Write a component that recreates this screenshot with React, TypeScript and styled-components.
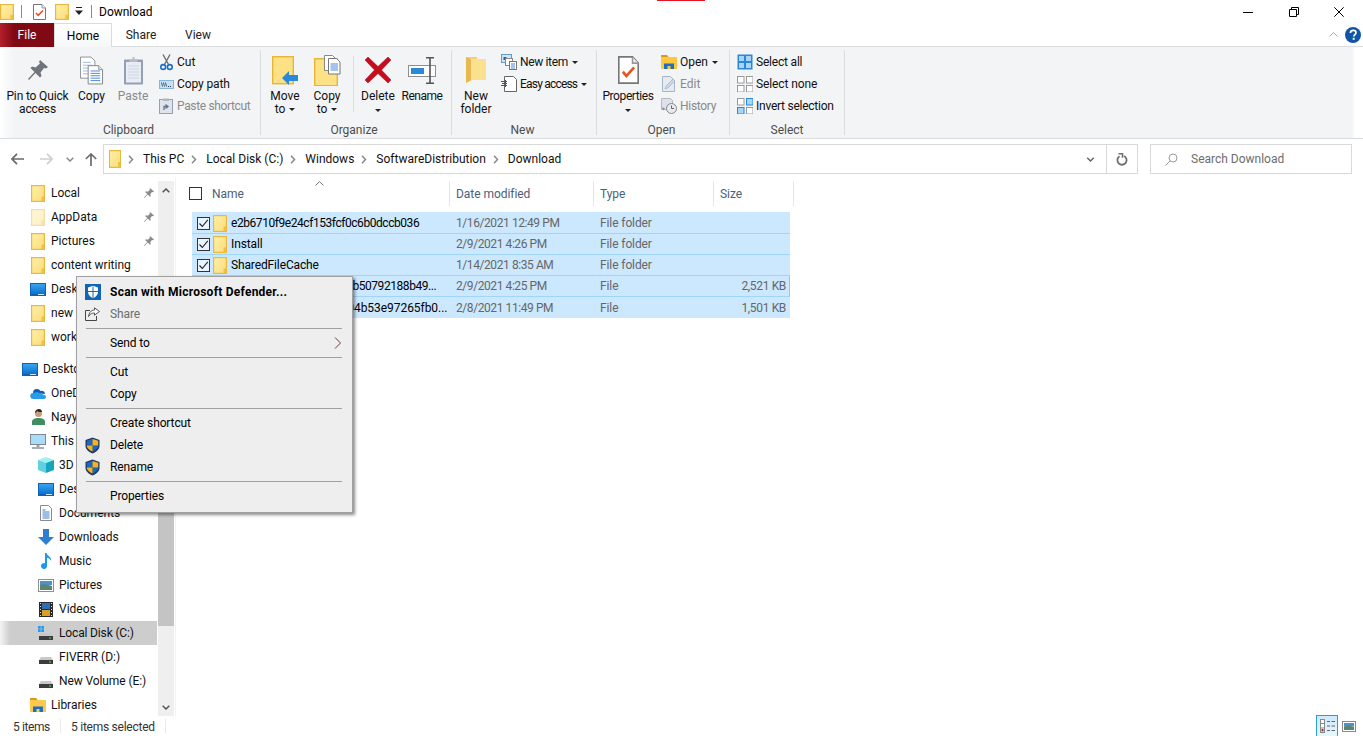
import React from "react";
import styled, { createGlobalStyle } from "styled-components";

const Global = createGlobalStyle`
  html, body { margin: 0; padding: 0; background: #fff; }
  body { font-family: Roboto, "Liberation Sans", sans-serif; font-size: 12px; color: #000; }
  svg { display: block; flex-shrink: 0; }
  * { box-sizing: border-box; }
`;

const Page = styled.div`
  position: relative; width: 1363px; height: 736px; overflow: hidden;
  display: flex; flex-direction: column; background: #fff;
`;
const RedStrip = styled.div`
  position: absolute; left: 657px; top: 0; width: 48px; height: 1px; background: #e81123;
`;
const TitleBar = styled.div`display: flex; align-items: center; height: 23px; flex: none;`;
const QuickSep = styled.div<{ $ml: number; $mr: number }>`
  width: 1px; height: 13px; background: #8a8a8a; margin-left: ${p => p.$ml}px; margin-right: ${p => p.$mr}px;
`;
const QuickSlot = styled.div<{ $ml: number }>`margin-left: ${p => p.$ml}px;`;
const WindowTitle = styled.div`margin-left: 7px; font-size: 12px; color: #000;`;
const WinControls = styled.div`margin-left: auto; display: flex; padding-right: 1px;`;
const WinButton = styled.div`width: 45.5px; height: 21px; display: flex; align-items: center; justify-content: center;`;

const TabRow = styled.div`
  display: flex; align-items: stretch; height: 24px; flex: none; border-bottom: 1px solid #dadbdc;
`;
const FileTab = styled.div`
  width: 54px; margin-bottom: -1px; color: #fff; display: flex; align-items: center; justify-content: center;
  background: linear-gradient(90deg, #b3202c 0, #7f0a14 14px, #7f0a14 100%);
`;
const Tab = styled.div<{ $w: number; $active?: boolean }>`
  width: ${p => p.$w}px; display: flex; align-items: center; justify-content: center; color: #222;
  ${p => p.$active ? `background: linear-gradient(#fff, #f6f7f8); border: 1px solid #dadbdc; border-bottom: 0; margin-bottom: -1px; color: #000;` : ""}
`;
const TabTools = styled.div`
  margin-left: auto; display: flex; align-items: center; gap: 7px; padding-right: 2px;
`;

const Ribbon = styled.div`
  height: 92px; flex: none; display: flex; padding-top: 3px; border-bottom: 1px solid #dadbdc;
  background: linear-gradient(90deg, #fff 0, #f3f4f6 14px, #f3f4f6 1352px, #fff 1355px);
`;
const Group = styled.div<{ $w: number; $pl?: number }>`
  width: ${p => p.$w}px; height: 85px; display: flex; flex-direction: column; flex: none;
  border-right: 1px solid #dcdddf; padding-left: ${p => p.$pl ?? 0}px;
`;
const GroupBody = styled.div`flex: 1; display: flex; align-items: flex-start; min-height: 0;`;
const GroupLabel = styled.div<{ $offset?: number }>`
  height: 14px; line-height: 18px; text-align: center; color: #4d4d4d; margin-left: ${p => p.$offset ?? 0}px;
`;
const LargeButton = styled.div<{ $w: number }>`
  width: ${p => p.$w}px; flex: none; display: flex; flex-direction: column; align-items: center; padding-top: 2px;
`;
const LargeIcon = styled.div`height: 36px; display: flex; align-items: center; justify-content: center;`;
const LargeText = styled.div<{ $off?: boolean; $ls?: number }>`
  line-height: 13px; text-align: center; white-space: nowrap; margin-top: 2px; color: ${p => p.$off ? "#8a8a8a" : "#111"};
  letter-spacing: ${p => p.$ls ?? 0}px;
`;
const VSep = styled.div`width: 1px; height: 56px; margin: 6px 0 0 4px; background: #dcdddf; flex: none;`;
const SmallColumn = styled.div<{ $ml?: number }>`
  display: flex; flex-direction: column; padding-top: 1px; margin-left: ${p => p.$ml ?? 0}px;
`;
const SmallRow = styled.div<{ $off?: boolean }>`
  display: flex; align-items: center; gap: 3px; height: 22px; white-space: nowrap; color: ${p => p.$off ? "#8a8a8a" : "#111"};
`;
const SmallLabel = styled.span<{ $ls?: number }>`letter-spacing: ${p => p.$ls ?? 0}px;`;
const SmallIcon = styled.div`width: 16px; display: flex; justify-content: center;`;
const Caret = styled.span`
  display: inline-block; width: 0; height: 0; margin-left: 4px; vertical-align: 2px;
  border-left: 3px solid transparent; border-right: 3px solid transparent; border-top: 3px solid #222;
`;
const CaretOnly = styled(Caret)`margin-left: 0; vertical-align: 1px;`;

const AddressRow = styled.div`
  height: 39px; flex: none; display: flex; align-items: flex-start; padding: 5px 11px 0 11px;
`;
const NavArrow = styled.div<{ $ml: number }>`
  height: 30px; display: flex; align-items: center; margin-left: ${p => p.$ml}px;
`;
const AddressBox = styled.div`
  flex: 1; height: 30px; margin-left: 6px; border: 1px solid #d9d9d9; display: flex; align-items: center; padding-left: 5px;
`;
const Crumb = styled.div`display: flex; align-items: center; white-space: nowrap; color: #111;`;
const CrumbText = styled.span`margin-left: 9px;`;
const CrumbChevron = styled.div`margin-left: 7px;`;
const AddressDrop = styled.div`margin-left: auto; display: flex; align-items: center;`;
const RefreshSlot = styled.div`
  margin-left: 11px; width: 31px; height: 28px; border-left: 1px solid #d9d9d9;
  display: flex; align-items: center; justify-content: center;
`;
const SearchBox = styled.div`
  width: 202px; height: 30px; margin-left: 12px; border: 1px solid #d9d9d9; display: flex; align-items: center;
  padding-left: 14px; gap: 13px; color: #6d6d6d;
`;

const Main = styled.div`flex: 1; display: flex; min-height: 0;`;
const NavPane = styled.div`width: 158px; flex: none; padding-top: 3px; overflow: hidden;`;
const NavRow = styled.div<{ $level: number; $sel?: boolean; $gap?: boolean }>`
  width: 157px; height: 24px; display: flex; align-items: center; gap: 5px; white-space: nowrap; color: #111;
  padding-left: ${p => 22 + p.$level * 8}px; padding-right: 3px;
  margin-top: ${p => p.$gap ? 8 : 0}px;
  ${p => p.$sel ? "background: linear-gradient(90deg, #f4f4f4 0, #cdcdcd 10px, #cdcdcd 100%);" : ""}
`;
const NavLabel = styled.span<{ $ls?: number }>`letter-spacing: ${p => p.$ls ?? 0}px;`;
const NavIcon = styled.div`width: 16px; display: flex; justify-content: center; flex: none;`;
const NavPin = styled.div`margin-left: auto;`;
const Track = styled.div`
  width: 16px; flex: none; margin-top: 3px; background: #efefef; display: flex; flex-direction: column;
`;
const TrackButton = styled.div`height: 18px; display: flex; align-items: center; justify-content: center; flex: none;`;
const TrackGap = styled.div<{ $h?: number }>`
  ${p => p.$h ? `height: ${p.$h}px; flex: none;` : "flex: 1;"}
`;
const Thumb = styled.div`height: 326px; flex: none; background: #c4c4c4;`;

const ListPane = styled.div`flex: 1; border-left: 1px solid #f2f2f2; margin-left: 1px; padding-top: 3px; min-width: 0;`;
const HeaderRow = styled.div`display: flex; height: 25px; color: #4c607a;`;
const HeaderCell = styled.div<{ $w: number }>`
  position: relative; width: ${p => p.$w}px; flex: none; display: flex; align-items: center; padding-left: 6px;
  border-right: 1px solid #e5e5e5; letter-spacing: -0.05px;
`;
const HeaderNameCell = styled(HeaderCell)`padding-left: 13px; gap: 10px;`;
const HeaderCheck = styled.div`width: 13px; height: 13px; border: 1px solid #333; background: #fff; flex: none;`;
const SortArrow = styled.div`position: absolute; left: 139px; top: 0;`;
const Rows = styled.div`margin: 6px 0 0 16px; width: 598px;`;
const Row = styled.div<{ $focus?: boolean; $first?: boolean }>`
  display: grid; grid-template-columns: 264px 144px 120px 70px; height: 21px; align-items: center; background: #cce8ff;
  border-top: 1px solid ${p => p.$first ? "#cce8ff" : "#9fd4fb"};
  ${p => p.$focus ? "box-shadow: inset 1px 0 #8ccbf8, inset -1px 0 #8ccbf8;" : ""}
  &:last-child { height: 22px; }
`;
const NameCell = styled.div`display: flex; align-items: center; white-space: nowrap; overflow: hidden; padding-left: 5px; color: #000;`;
const RowCheck = styled.div`width: 13px; height: 13px; border: 1px solid #333; background: #e8f4ff; flex: none;`;
const RowFolder = styled.div`width: 14px; margin-left: 3px; flex: none;`;
const RowName = styled.span<{ $ls: number }>`margin-left: 4px; letter-spacing: ${p => p.$ls}px;`;
const MetaCell = styled.div<{ $ls?: number }>`color: #666; white-space: nowrap; letter-spacing: ${p => p.$ls ?? 0}px;`;
const SizeCell = styled(MetaCell)`text-align: right; padding-right: 4px;`;

const StatusBar = styled.div`height: 20px; flex: none; display: flex; align-items: center; color: #333; padding-right: 7px;`;
const StatusCount = styled.div`width: 61px; padding-left: 13px; height: 14px; line-height: 16px; border-right: 1px solid #eaeaea; white-space: nowrap; letter-spacing: -0.4px;`;
const StatusSelected = styled.div`width: 105px; padding-left: 10px; height: 14px; line-height: 16px; border-right: 1px solid #eaeaea; white-space: nowrap; letter-spacing: -0.25px;`;
const ViewSwitch = styled.div`margin-left: auto; display: flex; align-items: center; gap: 4px;`;
const DetailsButton = styled.div`
  width: 22px; height: 21px; margin-top: -1px; border: 1px solid #26a0da; border-bottom: 0;
  background: linear-gradient(#cfe9fc, #e5f6fe); display: flex; align-items: center; justify-content: center;
`;

const ContextMenu = styled.div`
  position: absolute; left: 76px; top: 276px; width: 277px; height: 237px; padding-top: 4px;
  background: #eeeeee; border: 1px solid #a0a0a0; box-shadow: 2px 2px 3px rgba(0,0,0,.45);
`;
const MenuItem = styled.div<{ $off?: boolean; $bold?: boolean }>`
  height: 22px; display: flex; align-items: center; padding-left: 8px; position: relative; white-space: nowrap;
  color: ${p => p.$off ? "#6d6d6d" : "#000"}; font-weight: ${p => p.$bold ? 700 : 400};
  letter-spacing: ${p => p.$bold ? 0.25 : -0.12}px;
`;
const MenuIconSlot = styled.div`width: 25px; flex: none;`;
const MenuArrow = styled.div`margin-left: auto; margin-right: 11px;`;
const MenuSep = styled.div`height: 1px; background: #a0a0a0; margin: 3px 10px 3px 9px;`;

/* ---------- icons ---------- */
const FolderIcon = ({ w = 14, h = 17, faded = false }: { w?: number; h?: number; faded?: boolean }) => (
  <svg width={w} height={h} viewBox="0 0 14 17" preserveAspectRatio="none" opacity={faded ? 0.45 : 1}>
    <defs><linearGradient id="fg" x1="0" y1="0" x2="1" y2="1"><stop offset="0" stopColor="#fff0a8" /><stop offset="1" stopColor="#fbdc7a" /></linearGradient></defs>
    <rect x=".6" y=".6" width="12.8" height="15.8" fill="url(#fg)" stroke="#e8b840" strokeWidth="1.2" />
    <path d="M10.5 11.5h2.5v5h-2.5z" fill="#f0c040" />
  </svg>
);
const CheckDoc = ({ w = 13, h = 16 }: { w?: number; h?: number }) => (
  <svg width={w} height={h} viewBox="0 0 13 16" preserveAspectRatio="none">
    <path d="M.5.5h8.5l3.5 3.5v11.5h-12z" fill="#fff" stroke="#777" />
    <path d="M9 .5v3.5h3.5" fill="#eee" stroke="#999" />
    <path d="M3 9l2.2 2.4L10 6.5" fill="none" stroke="#e8531f" strokeWidth="1.6" />
  </svg>
);
const QuickDown = () => (
  <svg width="10" height="9" viewBox="0 0 10 9"><path d="M2 .5h6" stroke="#222" /><path d="M1 3.5h8L5 8z" fill="#222" /></svg>
);
const MinIcon = () => <svg width="10" height="10" viewBox="0 0 10 10"><path d="M0 5.5h10" stroke="#000" /></svg>;
const RestoreIcon = () => (
  <svg width="10" height="10" viewBox="0 0 10 10"><path d="M.5 2.5h7v7h-7z" fill="none" stroke="#000" /><path d="M2.5 2.5v-2h7v7h-2" fill="none" stroke="#000" /></svg>
);
const CloseIcon = () => <svg width="10" height="10" viewBox="0 0 10 10"><path d="M.3.3l9.4 9.4M9.7.3L.3 9.7" stroke="#000" /></svg>;
const CollapseIcon = () => <svg width="9" height="5" viewBox="0 0 9 5"><path d="M.5 4.5l4-4 4 4" fill="none" stroke="#aaa" /></svg>;
const HelpIcon = () => (
  <svg width="16" height="16" viewBox="0 0 16 16">
    <circle cx="8" cy="8" r="8" fill="#0f56a8" />
    <path d="M5.4 6c0-1.6 1.2-2.6 2.8-2.6S11 4.3 11 5.7c0 2-2.2 2-2.2 3.9" fill="none" stroke="#fff" strokeWidth="1.7" />
    <rect x="7.7" y="10.8" width="2" height="2" fill="#fff" />
  </svg>
);
const PinBig = () => (
  <svg width="20" height="20" viewBox="0 0 20 20">
    <path d="M12 0L20 7 18 8.5 16 8 12.5 12.5 13.5 16 12 17.5 7.5 13 1 20 0 19 6.5 12 2.5 8 4 6.5 7.5 7.5 12 3.5 11 2z" fill="#70757b" />
  </svg>
);
const CopyBig = () => (
  <svg width="24" height="29" viewBox="0 0 25 29">
    <path d="M.5.5h11l4 4v18H.5z" fill="#fff" stroke="#8d9196" />
    <path d="M3 6h8M3 9h10M3 12h10M3 15h10M3 18h10" stroke="#9db9dd" />
    <path d="M8.500 9.500h11l4 4v15h-15z" fill="#fff" stroke="#7f8388" />
    <path d="M19.500 9.500v4h4" fill="#e6e6e6" stroke="#999" />
    <path d="M11 15h10M11 17.500h10M11 20h10M11 22.500h10M11 25h10" stroke="#4a86d8" />
  </svg>
);
const PasteBig = () => (
  <svg width="21" height="29" viewBox="0 0 21 29" opacity=".8">
    <rect x="1" y="3.500" width="19" height="25" rx="1" fill="#7d8ba6" />
    <rect x="3" y="6" width="15" height="20.500" fill="#e7ebf3" />
    <path d="M5 10h11M5 13h11M5 16h11M5 19h11M5 22h11" stroke="#c5cfe0" />
    <path d="M6.500 6V3.500h3V1h2v2.500h3V6z" fill="#a8aeb8" />
  </svg>
);
const Scissors = () => (
  <svg width="13" height="17" viewBox="0 0 13 17">
    <path d="M3 .5L8.500 10.500M10 .5L4.500 10.500" stroke="#6e7074" strokeWidth="1.4" />
    <circle cx="3.200" cy="13" r="2.400" fill="none" stroke="#1e6fc4" strokeWidth="1.6" />
    <circle cx="9.800" cy="13" r="2.400" fill="none" stroke="#1e6fc4" strokeWidth="1.6" />
  </svg>
);
const CopyPath = () => (
  <svg width="15" height="9" viewBox="0 0 15 9">
    <rect x=".5" y=".5" width="14" height="8" fill="#c3e1f7" stroke="#86b5dc" />
    <path d="M2.500 2.500l1 4M4.500 2.500l1 4M6.500 2.500l1 4" stroke="#333" strokeWidth=".8" />
    <path d="M9 6.500h1M11 6.500h1" stroke="#333" />
  </svg>
);
const PasteShortcut = () => (
  <svg width="14" height="16" viewBox="0 0 14 16">
    <rect x=".5" y="1.500" width="13" height="14" fill="#dfe3ea" stroke="#98a0ae" />
    <rect x="4" y=".5" width="6" height="2.500" fill="#b2b7bf" />
    <path d="M5 12V8.500h3M6.500 6.500L9 8.500 6.500 10.500" fill="none" stroke="#62738e" strokeWidth="1.3" />
  </svg>
);
const MoveTo = () => (
  <svg width="27" height="29" viewBox="0 0 27 29">
    <rect x=".7" y=".7" width="20.600" height="27" fill="#fde285" stroke="#e6b53a" strokeWidth="1.400" />
    <path d="M10 22l7-7v4h9v6h-9v4z" fill="#2a88d8" />
  </svg>
);
const CopyTo = () => (
  <svg width="27" height="31" viewBox="0 0 27 31">
    <rect x=".7" y="3.700" width="22.600" height="27" fill="#fde285" stroke="#e6b53a" strokeWidth="1.400" />
    <path d="M10.500 .5h8l3 3v12h-11z" fill="#fff" stroke="#888" />
    <path d="M14.500 3.500h8l3.500 3.500v12h-11.500z" fill="#fff" stroke="#777" />
    <path d="M16.500 9h7.500M16.500 11h7.500M16.500 13h7.500M16.500 15h7.500" stroke="#4a86d8" />
  </svg>
);
const DeleteX = () => (
  <svg width="26" height="26" viewBox="0 0 26 26">
    <path d="M3 0l10 9.500L23 0l3 3-9.500 10L26 23l-3 3-10-9.500L3 26l-3-3 9.500-10L0 3z" fill="#c80c1e" stroke="#8f1420" strokeWidth=".5" />
  </svg>
);
const RenameIcon = () => (
  <svg width="29" height="27" viewBox="0 0 29 27">
    <rect x=".5" y="8.500" width="27" height="11" fill="#fff" stroke="#8a8f94" />
    <rect x="3" y="11" width="13" height="6" fill="#2a88d8" />
    <path d="M18 .8h3.500L22 1.500l.500-.7H26M22 1.500v24M18 26.200h3.500l.5-.7.500.7H26" fill="none" stroke="#555" strokeWidth="1.600" />
  </svg>
);
const NewFolderBig = () => (
  <svg width="20" height="28" viewBox="0 0 20 28">
    <path d="M0 1h11v2h9v21H6L0 27z" fill="#f3cf70" />
    <path d="M5 3h15v21H5z" fill="#fbe08f" />
    <path d="M0 1l5 2v21l-5 3z" fill="#e8b94f" />
  </svg>
);
const NewItem = () => (
  <svg width="16" height="16" viewBox="0 0 16 16">
    <rect x=".5" y=".5" width="10" height="8" fill="#cfe6f8" stroke="#5e9bc8" />
    <path d="M2.500 3h3v3h-3z" fill="#555" />
    <rect x="4.500" y="4.500" width="7" height="7" fill="#fff" stroke="#888" />
    <rect x="8.500" y="7.500" width="7" height="8" fill="#fff" stroke="#777" />
    <path d="M10 10h4M10 12h4M10 14h4" stroke="#4a86d8" />
  </svg>
);
const EasyAccess = () => (
  <svg width="16" height="16" viewBox="0 0 16 16">
    <path d="M3.500.5h9l3 3v12h-12z" fill="#fff" stroke="#666" />
    <path d="M0 5.500h6M1 7.500h5M0 9.500h6" stroke="#1e5fa8" />
    <path d="M4.500 4v7" stroke="#1e5fa8" />
  </svg>
);
const OpenIcon = () => (
  <svg width="16" height="14" viewBox="0 0 16 14">
    <path d="M0 0h6l1.500 2H16v12H0z" fill="#fdc83e" />
    <path d="M0 0h6l1.500 2H0z" fill="#d99a1a" />
    <path d="M3 14V8.500h10V14h-3.500v-3h-3v3z" fill="#1e6fc4" />
  </svg>
);
const EditIcon = () => (
  <svg width="14" height="16" viewBox="0 0 14 16">
    <path d="M.5.500h8l4 4v11H.5z" fill="#e6ebf3" stroke="#a9b4c6" />
    <path d="M3 13l1-3 7-7 2 2-7 7z" fill="#c9d4e5" stroke="#a0adc2" strokeWidth=".6" />
  </svg>
);
const HistoryIcon = () => (
  <svg width="16" height="16" viewBox="0 0 16 16">
    <path d="M.5.500h9l2 2v9H.5z" fill="#dde2ea" stroke="#b3b8c1" />
    <circle cx="10.500" cy="10.500" r="5" fill="#e8eaee" stroke="#84898f" />
    <path d="M10.500 7.500v3h2.500" fill="none" stroke="#666" />
    <path d="M1 9l3 1.500L2 12.500" fill="#8a8f96" />
  </svg>
);
const GridIcon = ({ cells, border }: { cells: string[]; border?: string[] }) => (
  <svg width="16" height="16" viewBox="0 0 16 16">
    {[[0, 0], [9, 0], [0, 9], [9, 9]].map(([x, y], i) => (
      <rect key={i} x={x + .5} y={y + .5} width="6.500" height="6.500" fill={cells[i]} stroke={border ? border[i] : "#2b88d8"} />
    ))}
  </svg>
);
const SelectAll = () => (
  <svg width="16" height="16" viewBox="0 0 16 16">
    <rect x=".5" y=".5" width="15" height="15" fill="#2b88d8" />
    <path d="M2 2h5v5H2zM9 2h5v5H9zM2 9h5v5H2zM9 9h5v5H9z" fill="#a9d4f5" />
  </svg>
);
const GRAY = "#9a9a9a", BLUE = "#2b88d8", LIGHT = "#a9d4f5";

const Chevron = ({ color = "#888" }: { color?: string }) => (
  <svg width="6" height="9" viewBox="0 0 6 9"><path d="M1 .8l3.500 3.700L1 8.200" fill="none" stroke={color} strokeWidth="1.500" /></svg>
);
const BackArrow = ({ color }: { color: string }) => (
  <svg width="13" height="12" viewBox="0 0 13 12"><path d="M6 .8L1 6l5 5.200M1 6h12" fill="none" stroke={color} strokeWidth="1.700" /></svg>
);
const ForwardArrow = ({ color }: { color: string }) => (
  <svg width="13" height="12" viewBox="0 0 13 12"><path d="M7 .8L12 6l-5 5.200M12 6H0" fill="none" stroke={color} strokeWidth="1.700" /></svg>
);
const UpArrow = ({ color }: { color: string }) => (
  <svg width="12" height="13" viewBox="0 0 12 13"><path d="M.8 6L6 1l5.200 5M6 1v12" fill="none" stroke={color} strokeWidth="1.700" /></svg>
);
const SmallDown = ({ color = "#777", w = 8 }: { color?: string; w?: number }) => (
  <svg width={w} height="5" viewBox="0 0 8 5"><path d="M.7.7L4 4l3.300-3.300" fill="none" stroke={color} strokeWidth="1.500" /></svg>
);
const SmallUp = ({ color = "#555", w = 8 }: { color?: string; w?: number }) => (
  <svg width={w} height="5" viewBox="0 0 8 5"><path d="M.7 4.300L4 1l3.300 3.300" fill="none" stroke={color} strokeWidth="1.500" /></svg>
);
const RefreshIcon = () => (
  <svg width="12" height="13" viewBox="0 0 12 13">
    <path d="M3.500 3.300a4.600 4.600 0 1 0 4.500-.3" fill="none" stroke="#707070" strokeWidth="1.800" />
    <path d="M2.500 .8h4v4" fill="none" stroke="#707070" strokeWidth="1.600" />
  </svg>
);
const SearchIcon = () => (
  <svg width="13" height="13" viewBox="0 0 13 13">
    <circle cx="8" cy="5" r="4" fill="none" stroke="#9a9a9a" />
    <path d="M5 8l-4.500 4.500" stroke="#9a9a9a" />
  </svg>
);
const PinSmall = () => (
  <svg width="10" height="10" viewBox="0 0 20 20">
    <path d="M12 0L20 7 18 8.500 16 8 12.500 12.500 13.500 16 12 17.500 7.500 13 1 20 0 19 6.500 12 2.500 8 4 6.500 7.500 7.500 12 3.500 11 2z" fill="#8a8a8a" />
  </svg>
);
const DesktopIcon = () => (
  <svg width="16" height="13" viewBox="0 0 16 13">
    <defs><linearGradient id="dg" x1="0" y1="0" x2="0" y2="1"><stop offset="0" stopColor="#38a3ef" /><stop offset="1" stopColor="#0c72cf" /></linearGradient></defs>
    <rect width="16" height="13" fill="#0d62b5" />
    <rect x="1" y="1" width="14" height="10" fill="url(#dg)" />
    <rect x="8" y="11" width="6" height="1" fill="#cfe8fb" />
  </svg>
);
const CloudIcon = () => (
  <svg width="16" height="11" viewBox="0 0 16 11">
    <path d="M3 5a4 4 0 0 1 7.500-2A3.200 3.200 0 0 1 15 6z" fill="#0a5fb4" />
    <path d="M3.500 11a3 3 0 0 1-.500-6l4-1 8.500 3.500A2.200 2.200 0 0 1 14 11z" fill="#2a9be8" />
  </svg>
);
const PersonIcon = () => (
  <svg width="13" height="16" viewBox="0 0 13 16">
    <path d="M0 16v-3c0-3 3-4 6.500-4s6.500 1 6.500 4v3z" fill="#3e8e62" />
    <circle cx="6.500" cy="4.500" r="3.500" fill="#c99a7c" />
    <path d="M3 4c0-3 2-4 4-4s3 1.500 3 3c-2 0-4 0-5-1-.5 1-1 1.500-2 2z" fill="#2b2320" />
  </svg>
);
const PcIcon = () => (
  <svg width="16" height="15" viewBox="0 0 16 15">
    <rect x=".5" y=".5" width="15" height="10" fill="#a9dcf8" stroke="#7b8a96" />
    <path d="M6.500 11h3v2h-3z" fill="#9aa5ae" />
    <path d="M2 14h12" stroke="#8a959e" strokeWidth="1.500" />
  </svg>
);
const CubeIcon = () => (
  <svg width="16" height="16" viewBox="0 0 16 16">
    <path d="M8 0l8 3-8 3-8-3z" fill="#9ff0f4" />
    <path d="M0 3l8 3v10l-8-3z" fill="#5ed2df" />
    <path d="M16 3L8 6v10l8-3z" fill="#1aa3bd" />
  </svg>
);
const DocIcon = () => (
  <svg width="12" height="16" viewBox="0 0 12 16">
    <path d="M.5.500h8l3 3v12H.5z" fill="#fff" stroke="#8a8a8a" />
    <path d="M2.500 5h3M2.500 7h7M2.500 9h7M2.500 11h7M2.500 13h7" stroke="#3a7fc8" />
  </svg>
);
const DownloadIcon = () => (
  <svg width="16" height="16" viewBox="0 0 16 16"><path d="M5 0h6v8h5l-8 8-8-8h5z" fill="#2f7fd1" /></svg>
);
const MusicIcon = () => (
  <svg width="12" height="16" viewBox="0 0 12 16">
    <path d="M5 0h1.500c.5 3 5.500 3.500 4.500 8-.5-2-2.500-3-4-3.200V13a3 3 0 1 1-2-2.800z" fill="#1a98f0" />
  </svg>
);
const PictureIcon = () => (
  <svg width="16" height="13" viewBox="0 0 16 13">
    <rect x=".5" y=".5" width="15" height="12" fill="#fff" stroke="#8f8f8f" />
    <rect x="2" y="2" width="12" height="4" fill="#4a94c8" />
    <path d="M2 6c3-1 6-1 12 1v4H2z" fill="#5b8572" />
  </svg>
);
const VideoIcon = () => (
  <svg width="14" height="15" viewBox="0 0 14 15">
    <rect width="14" height="15" fill="#2a2a2a" />
    <rect x="3" y="1" width="8" height="6" fill="#2c6fb8" />
    <rect x="3" y="8" width="8" height="6" fill="#d8a028" />
    <path d="M1 1.500h1M1 4.500h1M1 7.500h1M1 10.500h1M1 13.500h1M12 1.500h1M12 4.500h1M12 7.500h1M12 10.500h1M12 13.500h1" stroke="#ddd" />
  </svg>
);
const DriveBody = () => (
  <>
    <path d="M3 7h10l2 3H1z" fill="#c8c8c8" />
    <rect x="1" y="10" width="14" height="4" fill="#3c3c3c" />
    <rect x="11" y="11.500" width="2" height="1" fill="#4be04b" />
  </>
);
const DriveIcon = () => <svg width="16" height="15" viewBox="0 0 16 15"><DriveBody /></svg>;
const SystemDrive = () => (
  <svg width="16" height="15" viewBox="0 0 16 15">
    <DriveBody />
    <path d="M0 0h2.700v2.700H0zM3.300 0H6v2.700H3.300zM0 3.300h2.700V6H0zM3.300 3.300H6V6H3.300z" fill="#1f9bf0" />
  </svg>
);
const LibraryIcon = () => (
  <svg width="16" height="14" viewBox="0 0 16 14">
    <path d="M0 0h6l1.500 2H16v12H0z" fill="#fcc94a" />
    <path d="M0 0h6l1.500 2H0z" fill="#d99a1a" />
    <path d="M3 14V8.500h10V14h-3.500v-3h-3v3z" fill="#1e6fc4" />
  </svg>
);
const DefenderIcon = () => (
  <svg width="16" height="16" viewBox="0 0 16 16">
    <rect width="16" height="16" fill="#0f66b8" />
    <path d="M8 1.800l5 1.700v4.500c0 3-2.500 5-5 6.200-2.500-1.200-5-3.200-5-6.200V3.500z" fill="#fff" />
    <path d="M7.500 2.500h1V7H13v1H8.500v6h-1V8H3V7h4.500z" fill="#0f66b8" />
  </svg>
);
const ShareIcon = () => (
  <svg width="15" height="14" viewBox="0 0 15 14">
    <path d="M5 3.500H.5v10h11V9" fill="none" stroke="#444" />
    <path d="M9.500 .8L14.500 4.500 9.500 8.200V6C7 6 5 7 3.500 9.500 4 6 6 3 9.500 3z" fill="#fff" stroke="#444" strokeWidth=".9" />
  </svg>
);
const UacShield = () => (
  <svg width="15" height="17" viewBox="0 0 15 17">
    <path d="M7.500.5L14.500 3v6c0 3.500-3.500 6-7 7.500C4 15 .5 12.500.5 9V3z" fill="#1f3b66" />
    <path d="M7.500 2L7.500 8.500H1.800V3.700zM7.500 8.500h5.700c0 2.800-3 4.700-5.700 6z" fill="#1c68c0" />
    <path d="M7.500 2l5.700 1.700v4.800H7.500zM7.500 8.500v6c-2.700-1.300-5.700-3.200-5.700-6z" fill="#f5b323" />
  </svg>
);
const MenuChevron = () => (
  <svg width="7" height="12" viewBox="0 0 7 12"><path d="M1 .5L6.500 6 1 11.500" fill="none" stroke="#6a3a3a" /></svg>
);
const RowCheckMark = () => (
  <svg width="11" height="11" viewBox="0 0 11 11"><path d="M1.500 5.500L4.300 8.500 9.800 1.800" fill="none" stroke="#222" strokeWidth="1.100" /></svg>
);
const DetailsIcon = () => (
  <svg width="15" height="14" viewBox="0 0 15 14">
    <rect x=".5" y=".5" width="4" height="13" fill="#fff" stroke="#888" />
    <path d="M.5 4.500h4M.5 9h4" stroke="#888" />
    <rect x="1.500" y="10" width="2" height="2.500" fill="#b0282c" />
    <path d="M7 2.500h3M11.500 2.500H15M7 7h3M11.500 7H15M7 11.500h3M11.500 11.500H15" stroke="#666" />
  </svg>
);
const LargeViewIcon = () => (
  <svg width="14" height="11" viewBox="0 0 14 11">
    <rect x=".5" y=".5" width="13" height="10" fill="#fff" stroke="#888" />
    <rect x="2" y="2" width="10" height="3.500" fill="#4a94c8" />
    <path d="M2 5.500c3-1 6-1 10 .500V9H2z" fill="#5b8572" />
  </svg>
);

const navItems = [
  { t: "Local", i: <FolderIcon />, l: 1, pin: true },
  { t: "AppData", i: <FolderIcon faded />, l: 1, pin: true },
  { t: "Pictures", i: <FolderIcon />, l: 1, pin: true },
  { t: "content writing", i: <FolderIcon />, l: 1 },
  { t: "Desktop", i: <DesktopIcon />, l: 1 },
  { t: "new folder", i: <FolderIcon />, l: 1 },
  { t: "work", i: <FolderIcon />, l: 1 },
  { t: "Desktop", i: <DesktopIcon />, l: 0, gap: true },
  { t: "OneDrive", i: <CloudIcon />, l: 1 },
  { t: "Nayyab", i: <PersonIcon />, l: 1 },
  { t: "This PC", i: <PcIcon />, l: 1 },
  { t: "3D Objects", i: <CubeIcon />, l: 2 },
  { t: "Desktop", i: <DesktopIcon />, l: 2 },
  { t: "Documents", i: <DocIcon />, l: 2 },
  { t: "Downloads", i: <DownloadIcon />, l: 2 },
  { t: "Music", i: <MusicIcon />, l: 2 },
  { t: "Pictures", i: <PictureIcon />, l: 2, ls: -0.1 },
  { t: "Videos", i: <VideoIcon />, l: 2 },
  { t: "Local Disk (C:)", i: <SystemDrive />, l: 2, sel: true, ls: -0.15 },
  { t: "FIVERR (D:)", i: <DriveIcon />, l: 2 },
  { t: "New Volume (E:)", i: <DriveIcon />, l: 2, ls: -0.1 },
  { t: "Libraries", i: <LibraryIcon />, l: 1 },
];

const files = [
  { n: "e2b6710f9e24cf153fcf0c6b0dccb036", ls: -0.44, d: "1/16/2021 12:49 PM", t: "File folder", s: "", folder: true },
  { n: "Install", ls: -0.1, d: "2/9/2021 4:26 PM", t: "File folder", s: "", folder: true },
  { n: "SharedFileCache", ls: -0.13, d: "1/14/2021 8:35 AM", t: "File folder", s: "", folder: true },
  { n: "47c1d40ae92f36c08e5ab50792188b49...", ls: -0.44, d: "2/9/2021 4:25 PM", t: "File", s: "2,521 KB", focus: true },
  { n: "a2c93f0e51a7d26b8e04b53e97265fb0...", ls: -0.05, d: "2/8/2021 11:49 PM", t: "File", s: "1,501 KB" },
];

const crumbs = ["This PC", "Local Disk (C:)", "Windows", "SoftwareDistribution", "Download"];

export default function App() {
  return (
    <Page>
      <Global />
      <RedStrip />
      <TitleBar>
        <FolderIcon h={16} />
        <QuickSep $ml={7} $mr={11} />
        <CheckDoc />
        <QuickSlot $ml={9}><FolderIcon h={16} /></QuickSlot>
        <QuickSlot $ml={5}><QuickDown /></QuickSlot>
        <QuickSep $ml={7} $mr={0} />
        <WindowTitle>Download</WindowTitle>
        <WinControls>
          <WinButton><MinIcon /></WinButton>
          <WinButton><RestoreIcon /></WinButton>
          <WinButton><CloseIcon /></WinButton>
        </WinControls>
      </TitleBar>
      <TabRow>
        <FileTab>File</FileTab>
        <Tab $w={58} $active>Home</Tab>
        <Tab $w={58}>Share</Tab>
        <Tab $w={56}>View</Tab>
        <TabTools><CollapseIcon /><HelpIcon /></TabTools>
      </TabRow>
      <Ribbon>
        <Group $w={261}>
          <GroupBody>
            <LargeButton $w={75}><LargeIcon><PinBig /></LargeIcon><LargeText $ls={-0.15}>Pin to Quick<br />access</LargeText></LargeButton>
            <LargeButton $w={33}><LargeIcon><CopyBig /></LargeIcon><LargeText>Copy</LargeText></LargeButton>
            <LargeButton $w={50}><LargeIcon><PasteBig /></LargeIcon><LargeText $off>Paste</LargeText></LargeButton>
            <SmallColumn>
              <SmallRow><SmallIcon><Scissors /></SmallIcon><SmallLabel>Cut</SmallLabel></SmallRow>
              <SmallRow><SmallIcon><CopyPath /></SmallIcon><SmallLabel $ls={-0.1}>Copy path</SmallLabel></SmallRow>
              <SmallRow $off><SmallIcon><PasteShortcut /></SmallIcon><SmallLabel $ls={-0.35}>Paste shortcut</SmallLabel></SmallRow>
            </SmallColumn>
          </GroupBody>
          <GroupLabel $offset={-3}>Clipboard</GroupLabel>
        </Group>
        <Group $w={191} $pl={4}>
          <GroupBody>
            <LargeButton $w={40}><LargeIcon><MoveTo /></LargeIcon><LargeText>Move<br />to<Caret /></LargeText></LargeButton>
            <LargeButton $w={44}><LargeIcon><CopyTo /></LargeIcon><LargeText>Copy<br />to<Caret /></LargeText></LargeButton>
            <VSep />
            <LargeButton $w={48}><LargeIcon><DeleteX /></LargeIcon><LargeText>Delete<br /><CaretOnly /></LargeText></LargeButton>
            <LargeButton $w={40}><LargeIcon><RenameIcon /></LargeIcon><LargeText $ls={-0.5}>Rename</LargeText></LargeButton>
          </GroupBody>
          <GroupLabel $offset={-8}>Organize</GroupLabel>
        </Group>
        <Group $w={145}>
          <GroupBody>
            <LargeButton $w={48}><LargeIcon><NewFolderBig /></LargeIcon><LargeText>New<br />folder</LargeText></LargeButton>
            <SmallColumn $ml={1}>
              <SmallRow><SmallIcon><NewItem /></SmallIcon><SmallLabel $ls={-0.35}>New item<Caret /></SmallLabel></SmallRow>
              <SmallRow><SmallIcon><EasyAccess /></SmallIcon><SmallLabel $ls={-0.8}>Easy access<Caret /></SmallLabel></SmallRow>
            </SmallColumn>
          </GroupBody>
          <GroupLabel $offset={-3}>New</GroupLabel>
        </Group>
        <Group $w={133}>
          <GroupBody>
            <LargeButton $w={62}><LargeIcon><CheckDoc w={21} h={28} /></LargeIcon><LargeText $ls={-0.4}>Properties<br /><CaretOnly /></LargeText></LargeButton>
            <SmallColumn $ml={2}>
              <SmallRow><SmallIcon><OpenIcon /></SmallIcon><SmallLabel>Open<Caret /></SmallLabel></SmallRow>
              <SmallRow $off><SmallIcon><EditIcon /></SmallIcon><SmallLabel>Edit</SmallLabel></SmallRow>
              <SmallRow $off><SmallIcon><HistoryIcon /></SmallIcon><SmallLabel $ls={-0.3}>History</SmallLabel></SmallRow>
            </SmallColumn>
          </GroupBody>
          <GroupLabel $offset={-3}>Open</GroupLabel>
        </Group>
        <Group $w={115} $pl={7}>
          <GroupBody>
            <SmallColumn>
              <SmallRow><SmallIcon><SelectAll /></SmallIcon><SmallLabel $ls={-0.2}>Select all</SmallLabel></SmallRow>
              <SmallRow><SmallIcon><GridIcon cells={["#fff", "#fff", "#fff", "#fff"]} border={[GRAY, GRAY, GRAY, GRAY]} /></SmallIcon><SmallLabel $ls={-0.1}>Select none</SmallLabel></SmallRow>
              <SmallRow><SmallIcon><GridIcon cells={["#fff", LIGHT, LIGHT, "#fff"]} border={[GRAY, BLUE, BLUE, GRAY]} /></SmallIcon><SmallLabel $ls={-0.25}>Invert selection</SmallLabel></SmallRow>
            </SmallColumn>
          </GroupBody>
          <GroupLabel $offset={-7}>Select</GroupLabel>
        </Group>
      </Ribbon>
      <AddressRow>
        <NavArrow $ml={0}><BackArrow color="#6b6b6b" /></NavArrow>
        <NavArrow $ml={16}><ForwardArrow color="#cfcfcf" /></NavArrow>
        <NavArrow $ml={13}><SmallDown color="#8a8a8a" /></NavArrow>
        <NavArrow $ml={11}><UpArrow color="#6b6b6b" /></NavArrow>
        <AddressBox>
          <FolderIcon w={12} h={18} />
          {crumbs.map(c => (
            <Crumb key={c}>
              <CrumbChevron><Chevron /></CrumbChevron>
              <CrumbText>{c}</CrumbText>
            </Crumb>
          ))}
          <AddressDrop>
            <SmallDown color="#666" w={9} />
            <RefreshSlot><RefreshIcon /></RefreshSlot>
          </AddressDrop>
        </AddressBox>
        <SearchBox><SearchIcon />Search Download</SearchBox>
      </AddressRow>
      <Main>
        <NavPane>
          {navItems.map((n, i) => (
            <NavRow key={i} $level={n.l} $sel={n.sel} $gap={n.gap}>
              <NavIcon>{n.i}</NavIcon>
              <NavLabel $ls={n.ls}>{n.t}</NavLabel>
              {n.pin && <NavPin><PinSmall /></NavPin>}
            </NavRow>
          ))}
        </NavPane>
        <Track>
          <TrackButton><SmallUp /></TrackButton>
          <TrackGap $h={101} />
          <Thumb />
          <TrackGap />
          <TrackButton><SmallDown color="#555" /></TrackButton>
        </Track>
        <ListPane>
          <HeaderRow>
            <HeaderNameCell $w={274}>
              <HeaderCheck />
              Name
              <SortArrow><svg width="9" height="5" viewBox="0 0 9 5"><path d="M.5 4.500l4-4 4 4" fill="none" stroke="#777" /></svg></SortArrow>
            </HeaderNameCell>
            <HeaderCell $w={144}>Date modified</HeaderCell>
            <HeaderCell $w={120}>Type</HeaderCell>
            <HeaderCell $w={80}>Size</HeaderCell>
          </HeaderRow>
          <Rows>
            {files.map((f, i) => (
              <Row key={i} $first={i === 0} $focus={f.focus}>
                <NameCell>
                  <RowCheck><RowCheckMark /></RowCheck>
                  <RowFolder>{f.folder && <FolderIcon />}</RowFolder>
                  <RowName $ls={f.ls}>{f.n}</RowName>
                </NameCell>
                <MetaCell $ls={-0.42}>{f.d}</MetaCell>
                <MetaCell $ls={-0.1}>{f.t}</MetaCell>
                <SizeCell $ls={-0.35}>{f.s}</SizeCell>
              </Row>
            ))}
          </Rows>
        </ListPane>
      </Main>
      <StatusBar>
        <StatusCount>5 items</StatusCount>
        <StatusSelected>5 items selected</StatusSelected>
        <ViewSwitch>
          <DetailsButton><DetailsIcon /></DetailsButton>
          <LargeViewIcon />
        </ViewSwitch>
      </StatusBar>
      <ContextMenu>
        <MenuItem $bold><MenuIconSlot><DefenderIcon /></MenuIconSlot>Scan with Microsoft Defender...</MenuItem>
        <MenuItem $off><MenuIconSlot><ShareIcon /></MenuIconSlot>Share</MenuItem>
        <MenuSep />
        <MenuItem><MenuIconSlot />Send to<MenuArrow><MenuChevron /></MenuArrow></MenuItem>
        <MenuSep />
        <MenuItem><MenuIconSlot />Cut</MenuItem>
        <MenuItem><MenuIconSlot />Copy</MenuItem>
        <MenuSep />
        <MenuItem><MenuIconSlot />Create shortcut</MenuItem>
        <MenuItem><MenuIconSlot><UacShield /></MenuIconSlot>Delete</MenuItem>
        <MenuItem><MenuIconSlot><UacShield /></MenuIconSlot>Rename</MenuItem>
        <MenuSep />
        <MenuItem><MenuIconSlot />Properties</MenuItem>
      </ContextMenu>
    </Page>
  );
}
